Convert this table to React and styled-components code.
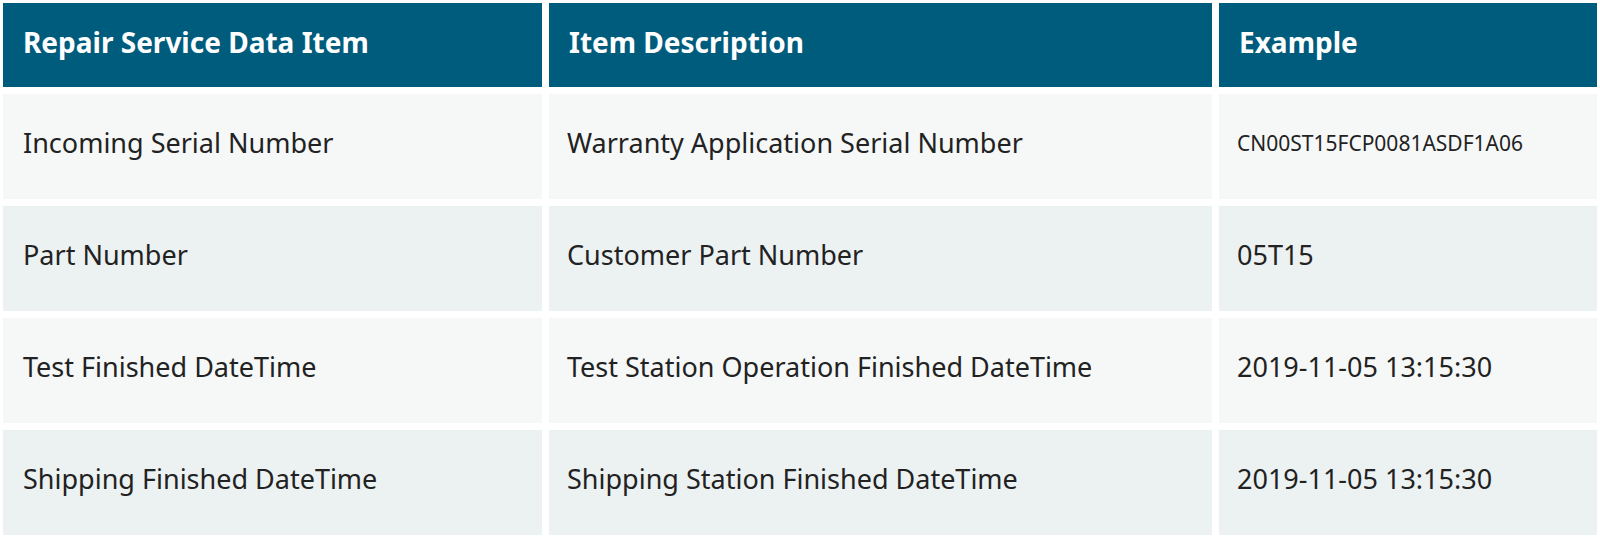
import React from "react";
import styled, { createGlobalStyle } from "styled-components";

const GlobalStyle = createGlobalStyle`
  html, body {
    margin: 0;
    padding: 0;
    background: #ffffff;
  }
  body {
    font-family: "Noto Sans", "Open Sans", sans-serif;
    color: #222222;
  }
`;

const Table = styled.div`
  display: grid;
  grid-template-columns: 539px 663px 378px;
  grid-template-rows: 84px repeat(4, 105px);
  row-gap: 7px;
  column-gap: 7px;
  padding: 3px;
  width: 1600px;
  box-sizing: border-box;
`;

const HeadCell = styled.div`
  display: flex;
  align-items: center;
  padding: 0 20px 7px;
  background: #005c7d;
  color: #ffffff;
  font-size: 28px;
  font-weight: 700;
`;

const Cell = styled.div`
  display: flex;
  align-items: center;
  padding: 0 ${p => (p.$first ? 20 : 18)}px 8px;
  background: ${p => (p.$even ? "#ecf1f2" : "#f6f8f8")};
  font-size: ${p => (p.$small ? 21 : 27)}px;
  color: #222222;
`;

const rows = [
  {
    item: "Incoming Serial Number",
    desc: "Warranty Application Serial Number",
    example: "CN00ST15FCP0081ASDF1A06",
    small: true,
  },
  { item: "Part Number", desc: "Customer Part Number", example: "05T15" },
  {
    item: "Test Finished DateTime",
    desc: "Test Station Operation Finished DateTime",
    example: "2019-11-05 13:15:30",
  },
  {
    item: "Shipping Finished DateTime",
    desc: "Shipping Station Finished DateTime",
    example: "2019-11-05 13:15:30",
  },
];

const App = () => (
  <>
    <GlobalStyle />
    <Table>
      <HeadCell>Repair Service Data Item</HeadCell>
      <HeadCell>Item Description</HeadCell>
      <HeadCell>Example</HeadCell>
      {rows.map((row, index) => (
        <React.Fragment key={index}>
          <Cell $first $even={index % 2 === 1}>{row.item}</Cell>
          <Cell $even={index % 2 === 1}>{row.desc}</Cell>
          <Cell $even={index % 2 === 1} $small={row.small}>
            {row.example}
          </Cell>
        </React.Fragment>
      ))}
    </Table>
  </>
);

export default App;
